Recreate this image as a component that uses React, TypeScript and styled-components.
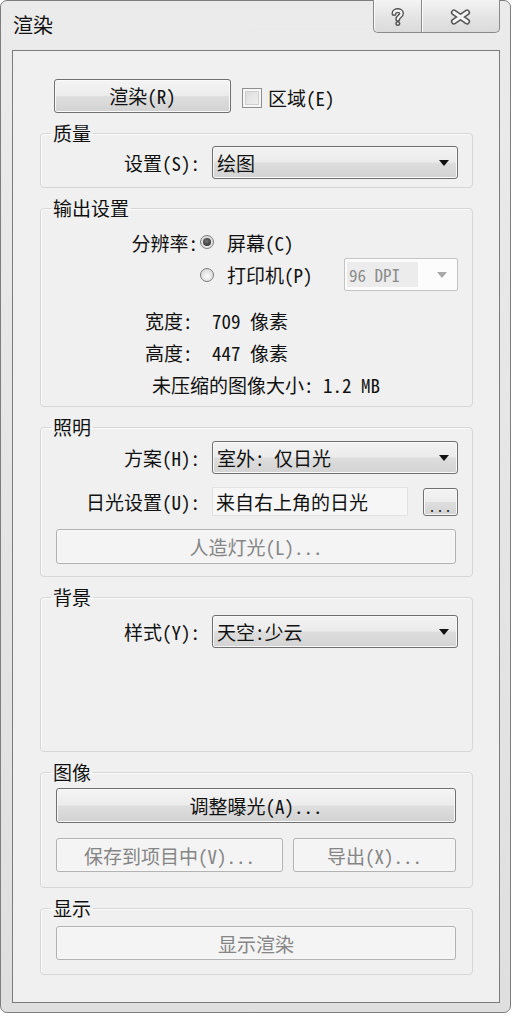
import React from 'react';
import styled, { createGlobalStyle } from 'styled-components';

const GlobalStyle = createGlobalStyle`
  html, body {
    margin: 0;
    padding: 0;
    background: #ffffff;
  }
  body {
    font-family: "Noto Sans Mono CJK SC", "Noto Sans CJK SC", "Noto Sans", sans-serif;
    color: #111111;
  }
`;

const Window = styled.div`
  width: 511px;
  height: 1013px;
  box-sizing: border-box;
  border: 1px solid #7e7e7e;
  border-radius: 7px;
  background: linear-gradient(#ebebeb, #dfdfdf);
  padding: 0 10px 9px 11px;
  display: flex;
  flex-direction: column;
`;

const TitleBar = styled.div`
  height: 49px;
  flex: none;
  display: flex;
  justify-content: space-between;
  align-items: flex-start;
`;

const Title = styled.div`
  margin: 12px 0 0 1px;
  font-size: 20px;
  line-height: 24px;
  color: #101010;
`;

const Captions = styled.div`
  display: flex;
  margin-top: -1px;
`;

const CaptionButton = styled.div<{ $w: number; $side: 'left' | 'right' }>`
  width: ${(p) => p.$w}px;
  height: 33px;
  box-sizing: border-box;
  border: 1px solid #8a8a8a;
  border-top: none;
  ${(p) => (p.$side === 'left' ? 'border-right: none;' : '')}
  border-radius: ${(p) => (p.$side === 'left' ? '0 0 0 5px' : '0 0 5px 0')};
  background: linear-gradient(#f3f3f3, #e4e4e4 55%, #dadada);
  box-shadow: inset 1px 0 #fbfbfb;
  display: flex;
  align-items: center;
  justify-content: center;
  padding-top: 2px;
`;

const Panel = styled.div`
  flex: 1;
  box-sizing: border-box;
  border: 1px solid #7b7b7b;
  background: #f0f0f0;
  padding: 27px 26px 0 27px;
  display: flex;
  flex-direction: column;
  gap: 10px;
`;

const RenderRow = styled.div`
  height: 35px;
  display: flex;
  align-items: center;
  padding-left: 14px;
`;

const Button = styled.div<{ $disabled?: boolean; $w?: number; $h?: number }>`
  box-sizing: border-box;
  width: ${(p) => (p.$w ? `${p.$w}px` : 'auto')};
  height: ${(p) => p.$h ?? 34}px;
  border: 1px solid ${(p) => (p.$disabled ? '#b2b2b2' : '#707070')};
  border-radius: 3px;
  background: ${(p) =>
    p.$disabled
      ? '#f4f4f4'
      : 'linear-gradient(#f4f4f4, #ececec 48%, #dedede 52%, #d2d2d2)'};
  box-shadow: inset 0 0 0 1px ${(p) => (p.$disabled ? '#f8f8f8' : '#fafafa')};
  color: ${(p) => (p.$disabled ? '#858585' : '#111111')};
  font-size: 19px;
  display: flex;
  align-items: center;
  justify-content: center;
  white-space: nowrap;
`;

const CheckLabel = styled.div`
  display: flex;
  align-items: center;
  margin-left: 11px;
  gap: 6px;
  font-size: 19px;
  margin-top: 4px;
`;

const CheckBox = styled.span`
  width: 20px;
  height: 20px;
  box-sizing: border-box;
  border: 1px solid #8e8f8f;
  background: #f4f4f4;
  box-shadow: inset 0 0 0 2px #f7f7f7, inset 0 0 0 3px #cfcfcf;
  background-image: linear-gradient(135deg, #d9d9d9, #f3f3f3);
`;

const Group = styled.fieldset<{ $pt: number; $pb: number; $gap?: number }>`
  margin: 0;
  min-width: 0;
  border: 1px solid #d6d6d6;
  border-radius: 4px;
  box-shadow: inset 1px 1px #fbfbfb;
  padding: ${(p) => p.$pt}px 0 ${(p) => p.$pb}px 0;
  display: flex;
  flex-direction: column;
  gap: ${(p) => p.$gap ?? 0}px;
`;

const Legend = styled.legend`
  margin-left: 10px;
  padding: 0 2px;
  font-size: 19px;
  line-height: 20px;
  color: #101010;
`;

const FieldRow = styled.div<{ $h?: number }>`
  display: grid;
  grid-template-columns: 159px 246px;
  column-gap: 12px;
  align-items: center;
  height: ${(p) => p.$h ?? 33}px;
`;

const Label = styled.div`
  text-align: right;
  font-size: 19px;
  white-space: nowrap;
`;

const Combo = styled.div`
  height: 33px;
  box-sizing: border-box;
  border: 1px solid #6f6f6f;
  border-radius: 3px;
  background: linear-gradient(#f3f3f3, #ebebeb 48%, #dddddd 52%, #d3d3d3);
  box-shadow: inset 0 0 0 1px #f9f9f9;
  display: flex;
  align-items: center;
  justify-content: space-between;
  padding: 0 8px 0 4px;
  font-size: 19px;
  white-space: pre;
`;

const Arrow = styled.span<{ $muted?: boolean }>`
  width: 0;
  height: 0;
  border-left: 5px solid transparent;
  border-right: 5px solid transparent;
  border-top: 6px solid ${(p) => (p.$muted ? '#a8a8a8' : '#111111')};
`;

const ResBlock = styled.div`
  display: flex;
  flex-direction: column;
  gap: 3px;
`;

const ResRow = styled.div<{ $h: number }>`
  height: ${(p) => p.$h}px;
  display: flex;
  align-items: center;
  padding-right: 14px;
  font-size: 19px;
`;

const ResLabel = styled.div`
  width: 157px;
  text-align: right;
  white-space: nowrap;
`;

const Radio = styled.span<{ $checked?: boolean }>`
  width: 14px;
  height: 14px;
  box-sizing: border-box;
  margin: 0 13px 0 2px;
  border-radius: 50%;
  border: 1px solid #7c7c7c;
  background: radial-gradient(circle at 50% 60%, #fbfbfb, #cfcfcf);
  display: flex;
  align-items: center;
  justify-content: center;
  &::after {
    content: '';
    display: ${(p) => (p.$checked ? 'block' : 'none')};
    width: 8px;
    height: 8px;
    border-radius: 50%;
    background: radial-gradient(circle at 45% 40%, #777777, #1d1d1d);
  }
`;

const DpiCombo = styled.div`
  margin-left: auto;
  width: 114px;
  height: 33px;
  box-sizing: border-box;
  border: 1px solid #c4c4c4;
  border-radius: 2px;
  background: #fcfcfc;
  display: flex;
  align-items: center;
  justify-content: space-between;
  padding: 0 10px 0 2px;
`;

const DpiText = styled.span`
  background: #ececec;
  color: #8c8c8c;
  font-size: 17px;
  line-height: 25px;
  padding: 0 18px 0 2px;
`;

const StatBlock = styled.div`
  margin-top: 14px;
  display: flex;
  flex-direction: column;
  gap: 2px;
`;

const StatRow = styled.div<{ $indent: number }>`
  height: 30px;
  display: flex;
  align-items: center;
  padding-left: ${(p) => p.$indent}px;
  font-size: 19px;
  white-space: pre;
`;

const StatKey = styled.span`
  width: 67px;
`;

const SunCell = styled.div`
  display: flex;
  align-items: center;
  justify-content: space-between;
`;

const SunField = styled.div`
  width: 196px;
  height: 29px;
  box-sizing: border-box;
  border: 1px solid #e2e2e2;
  background: #f6f6f6;
  font-size: 19px;
  display: flex;
  align-items: center;
  padding-left: 3px;
  white-space: nowrap;
`;

const DotsButton = styled(Button)`
  align-items: flex-end;
  padding-bottom: 4px;
  font-size: 14px;
  line-height: 10px;
  letter-spacing: 1px;
`;

const WideSlot = styled.div`
  padding: 0 16px 0 15px;
`;

const PairRow = styled.div`
  display: grid;
  grid-template-columns: 227px 163px;
  column-gap: 10px;
  padding-left: 15px;
`;

function HelpGlyph() {
  const d = 'M3 5.5 C3 1.6 10.5 1.6 10.5 5.5 C10.5 8.4 6.8 8.2 6.8 11.2';
  return (
    <svg width="14" height="19" viewBox="0 0 14 19">
      <path d={d} fill="none" stroke="#555555" strokeWidth="5" strokeLinecap="round" />
      <circle cx="6.8" cy="15.4" r="2.5" fill="#555555" />
      <path d={d} fill="none" stroke="#f5f5f5" strokeWidth="2.2" strokeLinecap="round" />
      <circle cx="6.8" cy="15.4" r="1" fill="#f5f5f5" />
    </svg>
  );
}

function CloseGlyph() {
  const d = 'M4 3.5 L17 12.5 M17 3.5 L4 12.5';
  return (
    <svg width="21" height="16" viewBox="0 0 21 16">
      <path d={d} stroke="#555555" strokeWidth="6.2" strokeLinecap="round" />
      <path d={d} stroke="#f5f5f5" strokeWidth="3.2" strokeLinecap="round" />
    </svg>
  );
}

export default function App() {
  return (
    <>
      <GlobalStyle />
      <Window>
        <TitleBar>
          <Title>渲染</Title>
          <Captions>
            <CaptionButton $w={48} $side="left">
              <HelpGlyph />
            </CaptionButton>
            <CaptionButton $w={79} $side="right">
              <CloseGlyph />
            </CaptionButton>
          </Captions>
        </TitleBar>

        <Panel>
          <RenderRow>
            <Button $w={177}>渲染(R)</Button>
            <CheckLabel>
              <CheckBox />
              区域(E)
            </CheckLabel>
          </RenderRow>

          <Group $pt={3} $pb={8}>
            <Legend>质量</Legend>
            <FieldRow>
              <Label>设置(S):</Label>
              <Combo>
                绘图
                <Arrow />
              </Combo>
            </FieldRow>
          </Group>

          <Group $pt={11} $pb={7}>
            <Legend>输出设置</Legend>
            <ResBlock>
              <ResRow $h={26}>
                <ResLabel>分辨率:</ResLabel>
                <Radio $checked />
                屏幕(C)
              </ResRow>
              <ResRow $h={33}>
                <ResLabel />
                <Radio />
                打印机(P)
                <DpiCombo>
                  <DpiText>96 DPI</DpiText>
                  <Arrow $muted />
                </DpiCombo>
              </ResRow>
            </ResBlock>
            <StatBlock>
              <StatRow $indent={104}>
                <StatKey>宽度:</StatKey>709 像素
              </StatRow>
              <StatRow $indent={104}>
                <StatKey>高度:</StatKey>447 像素
              </StatRow>
              <StatRow $indent={111}>未压缩的图像大小: 1.2 MB</StatRow>
            </StatBlock>
          </Group>

          <Group $pt={4} $pb={12} $gap={13}>
            <Legend>照明</Legend>
            <FieldRow>
              <Label>方案(H):</Label>
              <Combo>
                室外: 仅日光
                <Arrow />
              </Combo>
            </FieldRow>
            <FieldRow $h={29}>
              <Label>日光设置(U):</Label>
              <SunCell>
                <SunField>来自右上角的日光</SunField>
                <DotsButton $w={35} $h={28}>
                  ...
                </DotsButton>
              </SunCell>
            </FieldRow>
            <WideSlot>
              <Button $disabled $h={35}>
                人造灯光(L)...
              </Button>
            </WideSlot>
          </Group>

          <Group $pt={8} $pb={103}>
            <Legend>背景</Legend>
            <FieldRow>
              <Label>样式(Y):</Label>
              <Combo>
                天空:少云
                <Arrow />
              </Combo>
            </FieldRow>
          </Group>

          <Group $pt={6} $pb={15} $gap={15}>
            <Legend>图像</Legend>
            <WideSlot>
              <Button $h={35}>调整曝光(A)...</Button>
            </WideSlot>
            <PairRow>
              <Button $disabled>保存到项目中(V)...</Button>
              <Button $disabled>导出(X)...</Button>
            </PairRow>
          </Group>

          <Group $pt={8} $pb={14}>
            <Legend>显示</Legend>
            <WideSlot>
              <Button $disabled>显示渲染</Button>
            </WideSlot>
          </Group>
        </Panel>
      </Window>
    </>
  );
}
